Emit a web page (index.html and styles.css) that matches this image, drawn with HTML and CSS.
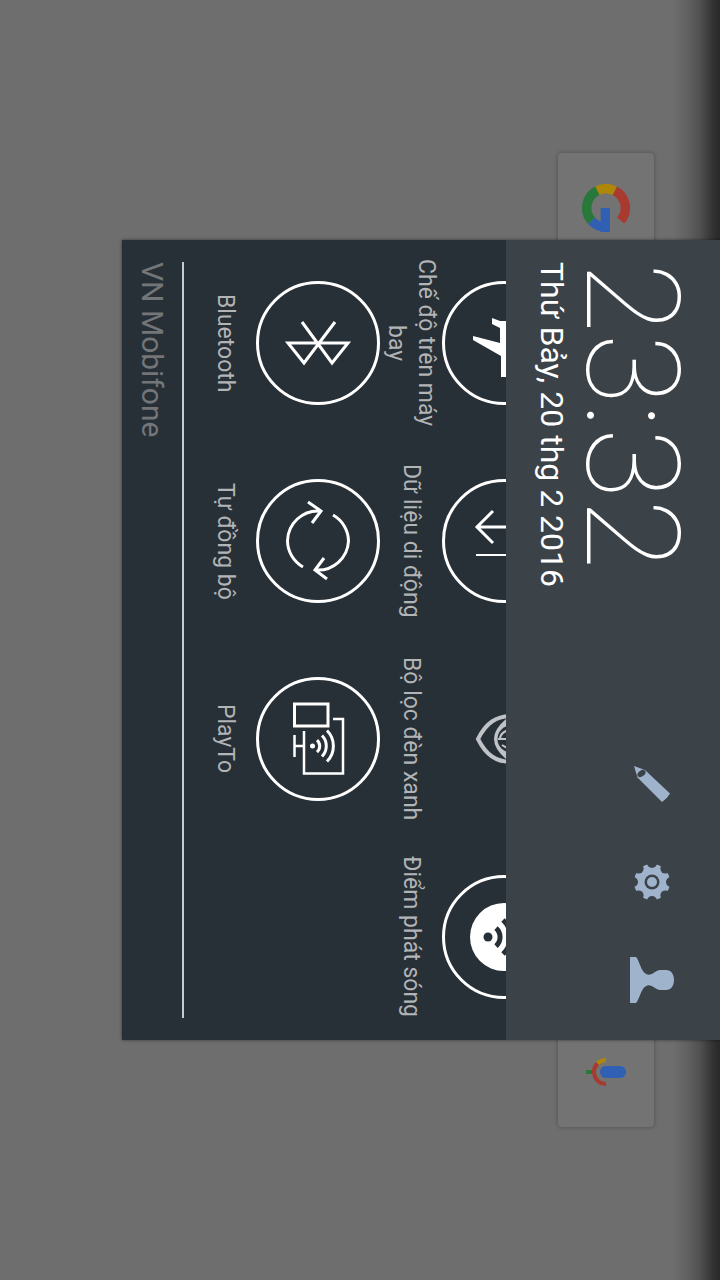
FILE: index.html
```html
<!DOCTYPE html>
<html lang="vi">
<head>
<meta charset="utf-8">
<meta name="viewport" content="width=device-width, initial-scale=1">
<title>Cài đặt nhanh</title>
<link rel="stylesheet" href="styles.css">
</head>
<body>
<div class="scene">
  <div class="home">
    <div class="search-bar">
      <svg class="logo" viewBox="0 0 48 48" aria-label="Google">
        <g fill="none" stroke-width="9.5">
          <path stroke="#a83a30" d="M38.7 36.5A19.2 19.2 0 0 0 32.7 6.8"/>
          <path stroke="#b08608" d="M32.7 6.8A19.2 19.2 0 0 0 15.3 6.8"/>
          <path stroke="#28783c" d="M15.3 6.8A19.2 19.2 0 0 0 9.7 36.9"/>
          <path stroke="#3060b4" d="M9.7 36.9A19.2 19.2 0 0 0 24 43.2H28"/>
        </g>
        <path fill="#3060b4" d="M18.700 24h9.300v24h-9.300z"/>
      </svg>
      <svg class="logo" viewBox="0 0 48 48" aria-label="Micro">
        <rect x="18" y="18" width="26" height="12" rx="6" fill="#3060b4"/>
        <path fill="#28783c" d="M4 22h7v4H4z"/>
        <g fill="none" stroke-width="4">
          <path stroke="#b08608" d="M24 12A12 12 0 0 0 15.500 15.500"/>
          <path stroke="#a83a30" d="M15.500 15.500A12 12 0 0 0 24 36"/>
        </g>
      </svg>
    </div>
  </div>

  <main class="shade">
    <header class="header">
      <div class="when">
        <time class="clock">23:32</time>
        <time class="date" datetime="2016-02-20">Thứ Bảy, 20 thg 2 2016</time>
      </div>
      <nav class="actions">
        <button class="action" type="button" aria-label="Chỉnh sửa">
          <svg viewBox="0 0 48 48"><path d="M6 6 17 10 42 33.500Q39 39 34 42L9.500 17.500z"/><ellipse class="cut" cx="13.500" cy="13.500" rx="4.500" ry="3" transform="rotate(-38 13.500 13.500)"/></svg>
        </button>
        <button class="action" type="button" aria-label="Cài đặt">
          <svg viewBox="0 0 48 48"><circle cx="24" cy="24" r="18"/>
            <g class="cut"><circle cx="43" cy="24" r="5"/><circle cx="37.400" cy="37.400" r="5"/><circle cx="24" cy="43" r="5"/><circle cx="10.600" cy="37.400" r="5"/><circle cx="5" cy="24" r="5"/><circle cx="10.600" cy="10.600" r="5"/><circle cx="24" cy="5" r="5"/><circle cx="37.400" cy="10.600" r="5"/><circle cx="24" cy="24" r="7.500"/></g>
            <circle cx="24" cy="24" r="5"/></svg>
        </button>
        <button class="action" type="button" aria-label="Người dùng">
          <svg viewBox="0 0 48 48"><path d="M2 1H8C11 4 12 11 15 15Q20 22 27 16Q30 14 32 14H38C43 14 46 18 46 24S43 34 38 34H32Q30 34 27 32Q20 26 15 33C12 37 11 44 8 47H2z"/></svg>
        </button>
      </nav>
    </header>

    <section class="tiles">
      <button class="tile" type="button">
        <svg class="dial" viewBox="0 0 124 124"><circle class="ring" cx="62" cy="62" r="60.500"/><path class="solid" d="M50 37 58 40H74V96H59V75L31 59V55L58 62V47L50 43z"/></svg>
        <span class="label">Chế độ trên máy bay</span>
      </button>
      <button class="tile" type="button">
        <svg class="dial" viewBox="0 0 124 124"><circle class="ring" cx="62" cy="62" r="60.500"/><path class="line" d="M88 48H35M51 32 35 48 51 64"/><path class="line thin" d="M34 76H88"/></svg>
        <span class="label">Dữ liệu di động</span>
      </button>
      <button class="tile off" type="button">
        <svg class="dial" viewBox="0 0 124 124"><path class="line" d="M36 62C44 46 54 39 70 39S96 46 104 62C96 78 86 85 70 85S44 78 36 62z"/><path class="lens" d="M64 42Q52 52 52 62T64 82H76Q88 72 88 62T76 42z"/><circle class="hole" cx="69" cy="62" r="13.500"/><path class="line thin" d="M56 62H84M58 62A11 9 0 0 1 80 62M60 68Q69 75 78 68"/></svg>
        <span class="label">Bộ lọc đèn xanh</span>
      </button>
      <button class="tile" type="button">
        <svg class="dial" viewBox="0 0 124 124"><circle class="ring" cx="62" cy="62" r="60.500"/><circle class="solid" cx="62" cy="62" r="34"/><circle class="hole" cx="46" cy="62" r="4.500"/><path class="wave" d="M54 53A12 12 0 0 1 54 71M61 45A23 23 0 0 1 61 79"/></svg>
        <span class="label">Điểm phát sóng</span>
      </button>
      <button class="tile" type="button">
        <svg class="dial" viewBox="0 0 124 124"><circle class="ring" cx="62" cy="62" r="60.500"/><path class="line" d="M46 41 76 82 92 62H32L48 82 79 41"/></svg>
        <span class="label">Bluetooth</span>
      </button>
      <button class="tile" type="button">
        <svg class="dial" viewBox="0 0 124 124"><circle class="ring" cx="62" cy="62" r="60.500"/><path class="line" d="M47 88A30.500 30.500 0 0 1 31.500 62A30.500 30.500 0 0 1 64 32M52 23 65 32 56 44M77 36A30.500 30.500 0 0 1 92.500 62A30.500 30.500 0 0 1 60 91M68 79 59 91 71 100"/></svg>
        <span class="label">Tự đồng bộ</span>
      </button>
      <button class="tile" type="button">
        <svg class="dial" viewBox="0 0 124 124"><circle class="ring" cx="62" cy="62" r="60.500"/><path class="line" d="M38.500 27H72V49H38.500z"/><path class="line snug" d="M77 42H87V96.500H48V54M38.500 58V80M38 69H48"/><circle class="solid" cx="56.500" cy="69" r="2.500"/><path class="line" d="M61 63A8 8 0 0 1 61 75M66 58.500A15 15 0 0 1 66 79.500M71 53.500A22 22 0 0 1 71 84.500"/></svg>
        <span class="label">PlayTo</span>
      </button>
    </section>

    <footer class="carrier">VN Mobifone</footer>
  </main>
</div>
</body>
</html>
```
FILE: styles.css
```css
:root {
  --header: #3b4248;
  --panel: #283037;
  --muted: #b2b4b6;
  --accent: #9fb3cd;
}

* {
  box-sizing: border-box;
}

body {
  margin: 0;
  background: #6e6e6e;
  font-family: Roboto, "Noto Sans", sans-serif;
}

/* The device is turned on its side: lines run top to bottom, blocks right to left. */
.scene {
  display: grid;
  writing-mode: vertical-rl;
  width: 100%;
  min-height: 100vh;
}

.home,
.shade {
  grid-area: 1 / 1;
}

.home {
  padding-block-start: 66px;
  padding-inline: 153px;
  background: linear-gradient(to left, #282828, #303030 6px, #505050 20px, #636363 34px, #6e6e6e 48px);
}

.search-bar {
  display: flex;
  justify-content: space-between;
  align-items: center;
  block-size: 96px;
  padding-inline: 31px;
  border-radius: 4px;
  background: #737373;
  box-shadow: 0 0 4px rgba(0, 0, 0, 0.3);
}

.logo {
  width: 48px;
  height: 48px;
}

.shade {
  position: relative;
  justify-self: center;
  align-self: start;
  inline-size: 800px;
  background: var(--panel);
  box-shadow: 0 0 3px rgba(0, 0, 0, 0.5);
}

.header {
  position: relative;
  z-index: 1;
  display: flex;
  justify-content: space-between;
  align-items: flex-start;
  block-size: 214px;
  padding-block-start: 20px;
  padding-inline: 22px 11px;
  background: var(--header);
  color: #fff;
}

.when {
  display: flex;
  flex-direction: column;
}

.clock {
  font-size: 130px;
  font-weight: 100;
  line-height: 138px;
}

.date {
  font-size: 32px;
  line-height: 20px;
}

.actions {
  display: flex;
}

button {
  writing-mode: inherit;
  margin: 0;
  padding: 0;
  border: 0;
  background: none;
  color: inherit;
  font: inherit;
}

.action {
  display: flex;
  align-items: center;
  justify-content: center;
  inline-size: 98px;
  block-size: 96px;
}

.action svg {
  width: 48px;
  height: 48px;
  fill: var(--accent);
}

.action .cut {
  fill: var(--header);
}

.tiles {
  display: grid;
  grid-template-columns: repeat(4, 1fr);
  margin-block-start: -60px;
  padding-inline: 4px;
}

.tile {
  display: flex;
  flex-direction: column;
  align-items: center;
}

.dial {
  width: 124px;
  height: 124px;
  fill: none;
  stroke: #fff;
  stroke-width: 3;
}

.off .dial {
  stroke: #bfc3c7;
}

.off .line {
  stroke-width: 4;
}

.dial .lens {
  fill: #bfc3c7;
  stroke: none;
}

.dial .thin {
  stroke-width: 2;
}

.dial .snug {
  stroke-width: 2.5;
}

.dial .solid {
  fill: #fff;
  stroke: none;
}

.dial .hole {
  fill: var(--panel);
  stroke: none;
}

.dial .wave {
  stroke: var(--panel);
  stroke-width: 5;
}

.label {
  display: flex;
  align-items: center;
  justify-content: center;
  block-size: 62px;
  padding-inline: 12px;
  color: var(--muted);
  font-size: 23px;
  line-height: 30px;
  text-align: center;
}

.carrier {
  margin-block-start: 10px;
  margin-inline: 22px;
  border-block-start: 2px solid #c8cacc;
  color: #737678;
  font-size: 30px;
  line-height: 60px;
}
```
